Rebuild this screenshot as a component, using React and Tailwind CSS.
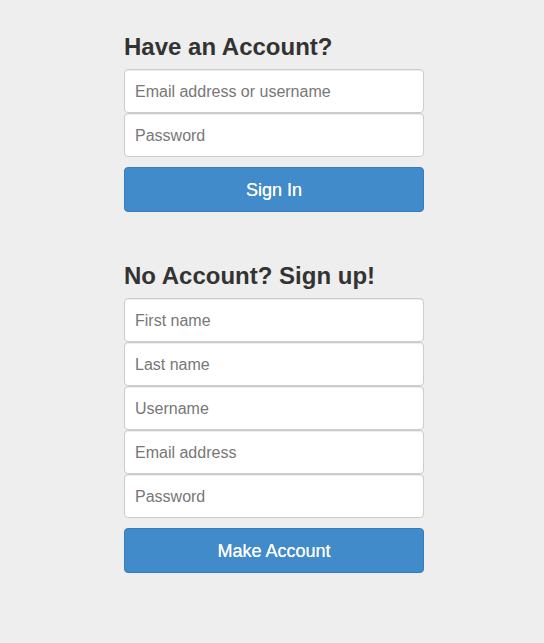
import { useState } from 'react';

const font = { fontFamily: '"Liberation Sans", Arial, Helvetica, sans-serif' };

function Field({ placeholder, type = 'text' }) {
  return (
    <input
      type={type}
      placeholder={placeholder}
      className="block w-full h-[44px] px-[10px] pt-[2px] bg-white border border-[#cccccc] rounded-[4px] text-[16px] text-[#555] placeholder:text-[#777] shadow-[inset_0_1px_1px_rgba(0,0,0,0.075)] outline-none"
    />
  );
}

export default function App() {
  const [signIn] = useState(['Email address or username', 'Password']);
  const [signUp] = useState(['First name', 'Last name', 'Username', 'Email address', 'Password']);

  return (
    <div className="min-h-screen bg-[#eeeeee] pt-[34px] pl-[124px]" style={font}>
      <div className="w-[300px]">
        <h2 className="text-[24px] leading-[26px] font-bold text-[#333] mb-[9px]">Have an Account?</h2>
        <div>
          {signIn.map((p) => (
            <Field key={p} placeholder={p} type={p === 'Password' ? 'password' : 'text'} />
          ))}
        </div>
        <button className="mt-[10px] w-full h-[45px] pt-[2px] rounded-[4px] bg-[#428bca] border border-[#357ebd] text-white text-[18px] [text-shadow:0_0_0.4px_#fff]">
          Sign In
        </button>

        <h2 className="mt-[51px] text-[24px] leading-[26px] font-bold text-[#333] mb-[9px]">No Account? Sign up!</h2>
        <div>
          {signUp.map((p) => (
            <Field key={p} placeholder={p} type={p === 'Password' ? 'password' : 'text'} />
          ))}
        </div>
        <button className="mt-[10px] w-full h-[45px] pt-[2px] rounded-[4px] bg-[#428bca] border border-[#357ebd] text-white text-[18px] [text-shadow:0_0_0.4px_#fff]">
          Make Account
        </button>
      </div>
    </div>
  );
}
